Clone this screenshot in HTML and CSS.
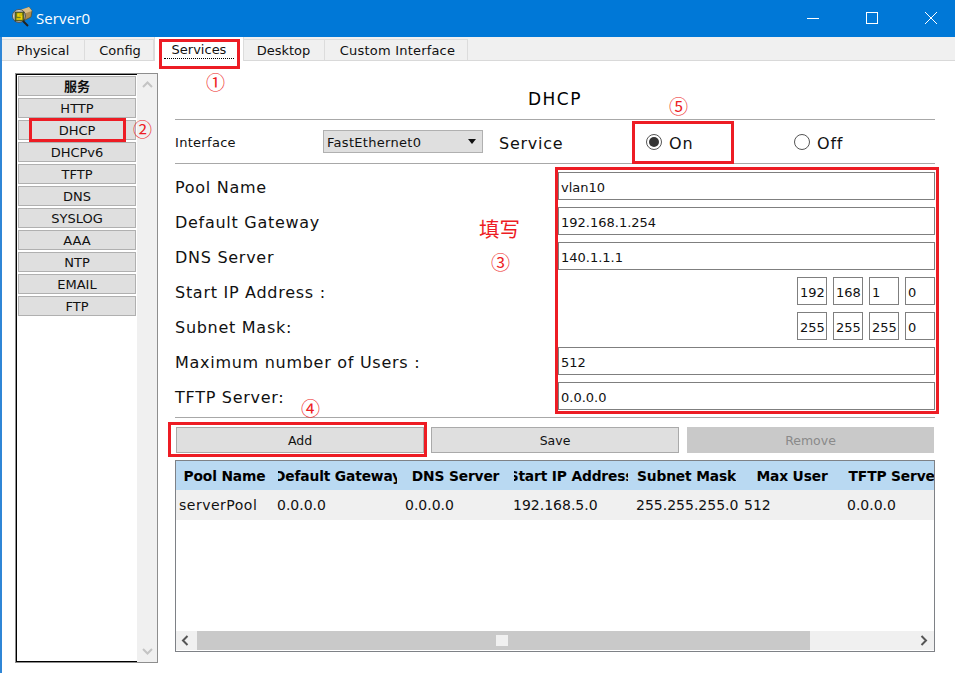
FILE: index.html
```html
<!DOCTYPE html>
<html lang="en">
<head>
<meta charset="utf-8">
<title>Server0</title>
<link rel="stylesheet" href="styles.css">
</head>
<body>
<div class="window">
  <header class="titlebar">
    <svg class="app-icon" width="22" height="22" viewBox="0 0 22 22">
      <path d="M8 6 L18 1 L21 5 L20 11 L12 15 L8 11Z" fill="#b08d4f" stroke="#5d4a22" stroke-width=".7"/>
      <path d="M9 4 L18 1 L21 5 L12 8Z" fill="#d9bd85"/>
      <circle cx="8" cy="10" r="6.5" fill="#d8d8d0" stroke="#555" stroke-width="1"/>
      <rect x="4" y="6" width="9" height="9" fill="#6f7d1c" stroke="#222" stroke-width=".6"/>
      <path d="M11 8 H7 V10 H10.5 V13 H5.5" fill="none" stroke="#f4d400" stroke-width="1.6"/>
      <path d="M12 15 L17 20" stroke="#222" stroke-width="2"/>
    </svg>
    <span class="title">Server0</span>
    <div class="controls">
      <svg class="ctl" width="12" height="12" viewBox="0 0 12 12"><path d="M0 6.5H12" stroke="#fff"/></svg>
      <svg class="ctl" width="12" height="12" viewBox="0 0 12 12"><rect x=".5" y=".5" width="11" height="11" fill="none" stroke="#fff"/></svg>
      <svg class="ctl" width="12" height="12" viewBox="0 0 12 12"><path d="M0 0L12 12M12 0L0 12" stroke="#fff"/></svg>
    </div>
  </header>

  <nav class="tabs">
    <span class="tab tab-physical">Physical</span>
    <span class="tab tab-config">Config</span>
    <span class="tab tab-active"><span class="tab-focus">Services</span></span>
    <span class="tab tab-desktop">Desktop</span>
    <span class="tab tab-custom">Custom Interface</span>
  </nav>

  <main class="content">
    <aside class="sidebar">
      <div class="side-list">
        <div class="side-btn side-head">服务</div>
        <div class="side-btn">HTTP</div>
        <div class="side-btn">DHCP</div>
        <div class="side-btn">DHCPv6</div>
        <div class="side-btn">TFTP</div>
        <div class="side-btn">DNS</div>
        <div class="side-btn">SYSLOG</div>
        <div class="side-btn">AAA</div>
        <div class="side-btn">NTP</div>
        <div class="side-btn">EMAIL</div>
        <div class="side-btn">FTP</div>
      </div>
      <div class="side-scroll">
        <svg width="11" height="7" viewBox="0 0 11 7"><path d="M1 6L5.5 1.5L10 6" fill="none" stroke="#c4c4c4" stroke-width="2"/></svg>
        <svg width="11" height="7" viewBox="0 0 11 7"><path d="M1 1L5.5 5.5L10 1" fill="none" stroke="#c4c4c4" stroke-width="2"/></svg>
      </div>
    </aside>

    <section class="panel">
      <h1 class="panel-title">DHCP</h1>
      <div class="service-row">
        <span class="iface-label">Interface</span>
        <div class="select"><span>FastEthernet0</span><i class="caret"></i></div>
        <span class="service-label">Service</span>
        <label class="radio radio-on"><i class="dot dot-on"></i><span class="radio-text">On</span></label>
        <label class="radio radio-off"><i class="dot"></i><span class="radio-text">Off</span></label>
      </div>
      <div class="form">
        <div class="row"><label>Pool Name</label><div class="field">vlan10</div></div>
        <div class="row"><label>Default Gateway</label><div class="field">192.168.1.254</div></div>
        <div class="row"><label>DNS Server</label><div class="field">140.1.1.1</div></div>
        <div class="row"><label>Start IP Address :</label><div class="octets"><div class="octet">192</div><div class="octet">168</div><div class="octet">1</div><div class="octet">0</div></div></div>
        <div class="row"><label>Subnet Mask:</label><div class="octets"><div class="octet">255</div><div class="octet">255</div><div class="octet">255</div><div class="octet">0</div></div></div>
        <div class="row"><label>Maximum number of Users :</label><div class="field">512</div></div>
        <div class="row"><label>TFTP Server:</label><div class="field">0.0.0.0</div></div>
      </div>
      <div class="actions">
        <div class="btn">Add</div>
        <div class="btn">Save</div>
        <div class="btn btn-off">Remove</div>
      </div>
      <div class="table">
        <div class="t-row t-head">
          <span class="c c1"><span class="clip">Pool Name</span></span><span class="c c2"><span class="clip">Default Gateway</span></span><span class="c c3"><span class="clip">DNS Server</span></span><span class="c c4"><span class="clip">Start IP Address</span></span><span class="c c5"><span class="clip">Subnet Mask</span></span><span class="c c6"><span class="clip">Max User</span></span><span class="c c7"><span class="clip">TFTP Server</span></span>
        </div>
        <div class="t-row t-body">
          <span class="c c1">serverPool</span><span class="c c2">0.0.0.0</span><span class="c c3">0.0.0.0</span><span class="c c4">192.168.5.0</span><span class="c c5">255.255.255.0</span><span class="c c6">512</span><span class="c c7">0.0.0.0</span>
        </div>
        <div class="t-fill"></div>
        <div class="h-scroll">
          <svg class="arr arr-left" width="8" height="11" viewBox="0 0 8 11"><path d="M6.5 1L2 5.5L6.5 10" fill="none" stroke="#555" stroke-width="2"/></svg>
          <div class="track"><i class="thumb"></i></div>
          <svg class="arr arr-right" width="8" height="11" viewBox="0 0 8 11"><path d="M1.5 1L6 5.5L1.5 10" fill="none" stroke="#555" stroke-width="2"/></svg>
        </div>
      </div>
    </section>
  </main>

  <div class="mark m-services"></div>
  <div class="mark m-dhcp"></div>
  <div class="mark m-on"></div>
  <div class="mark m-form"></div>
  <div class="mark m-add"></div>
  <span class="note n1">①</span>
  <span class="note n2">②</span>
  <span class="note n3">③</span>
  <span class="note n4">④</span>
  <span class="note n5">⑤</span>
  <span class="note n-fill">填写</span>
</div>
</body>
</html>
```
FILE: styles.css
```css
* { box-sizing: border-box; }
html, body { margin: 0; padding: 0; }
body { width: 955px; height: 673px; overflow: hidden; background: #fff; font-family: "DejaVu Sans", Verdana, sans-serif; color: #111; }
.window { position: relative; width: 955px; height: 673px; border-left: 2px solid #2f86d6; display: flex; flex-direction: column; background: #fff; }

.titlebar { height: 37px; margin-left: -2px; background: #0078d7; display: flex; align-items: center; padding-left: 11px; color: #fff; flex: none; }
.app-icon { flex: none; margin-top: -3px; }
.title { margin-left: 3px; font: 15px "Open Sans", "DejaVu Sans", sans-serif; letter-spacing: .1px; margin-top: -2px; }
.controls { margin-left: auto; display: flex; margin-top: -1px; padding-right: 18px; gap: 47px; }
.ctl { display: block; }

.tabs { height: 24px; flex: none; background: #f0f0f0; border-bottom: 1px solid #d9d9d9; display: flex; align-items: flex-end; font-size: 13px; }
.tab { height: 21px; display: flex; justify-content: center; align-items: center; border-right: 1px solid #dcdcdc; border-top: 1px solid #dcdcdc; }
.tab-physical { width: 83px; }
.tab-config { width: 69px; padding-left: 2px; }
.tab-active { width: 90px; height: 24px; margin-bottom: -1px; background: #fff; align-items: flex-start; padding-top: 5px; border-left: 1px solid #dcdcdc; border-top: 0; }
.tab-focus { border-bottom: 1px dotted #000; padding: 0 8px; line-height: 15px; height: 17px; }
.tab-desktop { width: 81px; padding-right: 1px; }
.tab-custom { width: 143px; letter-spacing: .2px; padding-left: 3px; }

.content { flex: 1; display: flex; padding: 12px 20px 0 13px; min-height: 0; }
.sidebar { width: 143px; height: 590px; flex: none; display: flex; border: 1px solid #8e8e8e; }
.side-list { width: 121px; flex: none; border: 1px solid #000; border-right: 0; padding: 1px 0 0 1px; display: flex; flex-direction: column; gap: 2px; }
.side-btn { width: 118px; height: 20px; background: #dfdfdf; border: 1px solid #b0b0b0; font-size: 13px; display: flex; align-items: center; justify-content: center; flex: none; }
.side-head { font-weight: 700; font-family: "DejaVu Sans", "Noto Sans CJK SC", sans-serif; padding-bottom: 2px; }
.side-scroll { flex: 1; background: #f0f0f0; display: flex; flex-direction: column; justify-content: space-between; align-items: center; padding: 7px 0; }

.panel { margin-left: 17px; width: 760px; flex: none; display: flex; flex-direction: column; }
.panel-title { margin: 0; height: 47px; font-size: 17px; font-weight: 400; letter-spacing: 1.5px; text-align: center; padding-top: 14px; line-height: 24px; color: #000; border-bottom: 1px solid #a8a8a8; }
.service-row { height: 44px; flex: none; border-bottom: 1px solid #a8a8a8; display: flex; align-items: center; }
.iface-label { width: 148px; font-size: 13px; letter-spacing: .3px; padding-top: 1px; }
.select { width: 160px; height: 23px; background: #dfdfdf; border: 1px solid #b0b0b0; font-size: 13px; letter-spacing: .3px; display: flex; align-items: center; justify-content: space-between; padding: 1px 6px 0 3px; }
.caret { border: 4px solid transparent; border-top: 5px solid #111; border-bottom: 0; margin-top: -1px; }
.service-label { width: 147px; margin-left: 16px; font-size: 16px; letter-spacing: .75px; padding-top: 3px; }
.radio { display: flex; align-items: center; font-size: 16px; letter-spacing: .8px; gap: 7px; }
.radio-text { padding-top: 3px; }
.radio-on { width: 148px; }
.dot { width: 16px; height: 16px; border-radius: 50%; border: 1px solid #555; background: #fff; display: block; position: relative; }
.dot-on::after { content: ""; position: absolute; left: 2px; top: 2px; width: 10px; height: 10px; border-radius: 50%; background: #333; }

.form { display: flex; flex-direction: column; gap: 7px; padding-top: 8px; flex: none; }
.row { height: 28px; display: flex; align-items: center; justify-content: space-between; }
.row label { font-size: 16px; letter-spacing: .72px; color: #111; padding-top: 2px; }
.field { width: 377px; height: 28px; border: 1px solid #7f7f7f; font-size: 13px; display: flex; align-items: center; padding: 2px 0 0 2px; background: #fff; }
.octets { display: flex; gap: 6px; }
.octet { width: 30px; height: 28px; border: 1px solid #7f7f7f; font-size: 13px; display: flex; align-items: center; padding: 2px 0 0 2px; }

.actions { margin-top: 7px; border-top: 1px solid #a8a8a8; padding: 9px 0 0 1px; display: flex; gap: 7px; flex: none; }
.btn { width: 248px; height: 26px; background: #dfdfdf; border: 1px solid #aaa; font-size: 12.5px; display: flex; align-items: center; justify-content: center; }
.btn-off { background: #c9c9c9; border-color: #c9c9c9; color: #8a8a8a; margin-left: 1px; width: 247px; }

.table { margin-top: 7px; width: 760px; height: 192px; border: 1px solid #7e8186; display: flex; flex-direction: column; overflow: hidden; flex: none; }
.t-row { display: flex; flex: none; font-size: 14px; align-items: center; }
.t-head { height: 29px; background: #b9d9f2; font-weight: 700; font-size: 13.8px; letter-spacing: -.15px; color: #000; }
.t-body { height: 30px; background: #f0f0f0; }
.c { display: block; flex: none; padding-left: 3px; white-space: nowrap; overflow: hidden; }
.t-body .c1 { letter-spacing: .5px; }
.t-head .c { padding: 0 5px 0 4px; overflow: visible; }
.c1 { width: 98px; } .c2 { width: 128px; } .c3 { width: 108px; } .c4 { width: 123px; } .c5 { width: 108px; } .c6 { width: 103px; } .c7 { width: 103px; }
.clip { display: flex; justify-content: center; overflow: hidden; }
.t-fill { flex: 1; }
.h-scroll { flex: none; height: 20px; background: #f0f0f0; border-bottom: 1px solid #fff; display: flex; align-items: center; }
.arr { flex: none; }
.arr-left { margin: 0 8px 0 5px; }
.arr-right { margin: 0 6px 0 auto; }
.track { flex: none; width: 613px; height: 19px; background: #c9c9c9; position: relative; }
.thumb { position: absolute; left: 299px; top: 4px; width: 12px; height: 11px; background: #f0f0f0; display: block; }

.mark { position: absolute; border: 3px solid #ed1c24; pointer-events: none; }
.m-services { left: 157px; top: 39px; width: 81px; height: 30px; }
.m-dhcp { left: 27px; top: 118px; width: 97px; height: 24px; }
.m-on { left: 630px; top: 121px; width: 102px; height: 43px; }
.m-form { left: 553px; top: 167px; width: 384px; height: 247px; }
.m-add { left: 166px; top: 422px; width: 259px; height: 35px; }
.note { position: absolute; color: #ed1c24; font-family: "Noto Sans CJK SC", sans-serif; font-size: 19px; line-height: 20px; }
.n1 { left: 204px; top: 72px; }
.n2 { left: 131px; top: 119px; }
.n3 { left: 489px; top: 252px; }
.n4 { left: 299px; top: 398px; }
.n5 { left: 667px; top: 96px; }
.n-fill { left: 477px; top: 218px; font-size: 20.5px; }
```
